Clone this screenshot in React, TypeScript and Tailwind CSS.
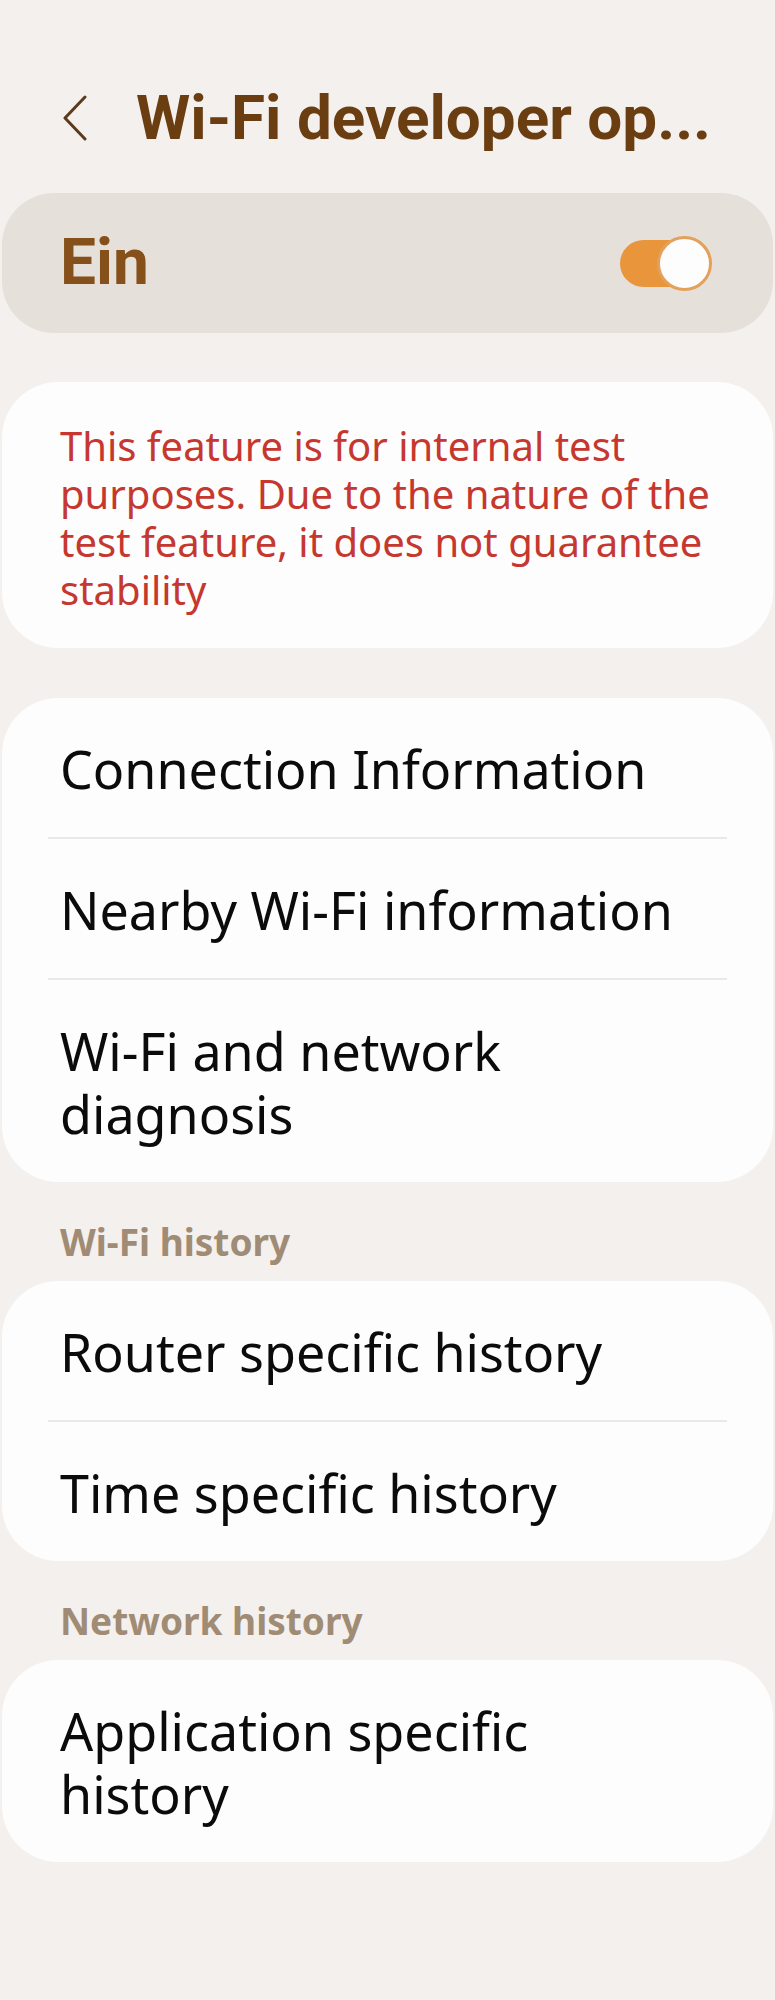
import React from "react";

const bodyFont = { fontFamily: '"Noto Sans", "Open Sans", sans-serif' };
const headFont = { fontFamily: 'Roboto, "Noto Sans", sans-serif' };

const Row = ({ label }: { label: string }) => (
  <div className="pl-[58px] pr-[83px] pt-[39px] pb-[37px] text-[52px] leading-[63px] text-[#0b0b0b]">
    {label}
  </div>
);

const Divider = () => <div className="mx-[46px] h-[2px] bg-[#ebe8e5]" />;

const Card = ({ items }: { items: string[] }) => (
  <div className="mx-[2px] rounded-[56px] bg-[#fdfdfd]">
    {items.map((item, i) => (
      <React.Fragment key={item}>
        {i > 0 && <Divider />}
        <Row label={item} />
      </React.Fragment>
    ))}
  </div>
);

const SectionLabel = ({ text }: { text: string }) => (
  <div className="px-[60px] pt-[36px] pb-[15px] text-[37px] leading-[48px] font-bold text-[#a08b75]">
    {text}
  </div>
);

const Toggle = () => (
  <div className="relative w-[92px] h-[55px]">
    <div className="absolute left-0 top-[4px] h-[47px] w-[80px] rounded-full bg-[#e8953c]" />
    <div className="absolute right-0 top-0 h-[55px] w-[55px] rounded-full border-[3px] border-[#e3a15c] bg-[#fdfdfd]" />
  </div>
);

export default function App() {
  return (
    <div className="min-h-[2000px] bg-[#f4f0ed]" style={bodyFont}>
      {/* header */}
      <div className="flex items-center pt-[80px] pl-[62px] h-[156px]">
        <svg width="26" height="46" viewBox="0 0 26 46" fill="none" className="shrink-0">
          <polyline
            points="23,2 3,23 23,44"
            stroke="#5c3a1c"
            strokeWidth="3"
            strokeLinecap="round"
            strokeLinejoin="round"
          />
        </svg>
        <h1
          className="ml-[48px] whitespace-nowrap text-[62px] leading-[76px] font-bold text-[#6b3e12]"
          style={headFont}
        >
          Wi-Fi developer op...
        </h1>
      </div>

      {/* master switch */}
      <div className="mx-[2px] mt-[37px] flex h-[140px] items-center justify-between rounded-[52px] bg-[#e6e0da] pl-[58px] pr-[61px]">
        <span className="text-[64px] leading-[64px] font-bold text-[#86501a]" style={headFont}>
          Ein
        </span>
        <Toggle />
      </div>

      {/* warning */}
      <div className="mx-[2px] mt-[49px] rounded-[56px] bg-[#fdfdfd] pl-[58px] pr-[46px] pt-[40px] pb-[34px]">
        <p className="text-[40px] leading-[48px] text-[#c6372f]">
          This feature is for internal test purposes. Due to the nature of the test feature, it
          does not guarantee stability
        </p>
      </div>

      <div className="mt-[50px]">
        <Card items={["Connection Information", "Nearby Wi-Fi information", "Wi-Fi and network diagnosis"]} />
      </div>

      <SectionLabel text="Wi-Fi history" />
      <Card items={["Router specific history", "Time specific history"]} />

      <SectionLabel text="Network history" />
      <Card items={["Application specific history"]} />
    </div>
  );
}
